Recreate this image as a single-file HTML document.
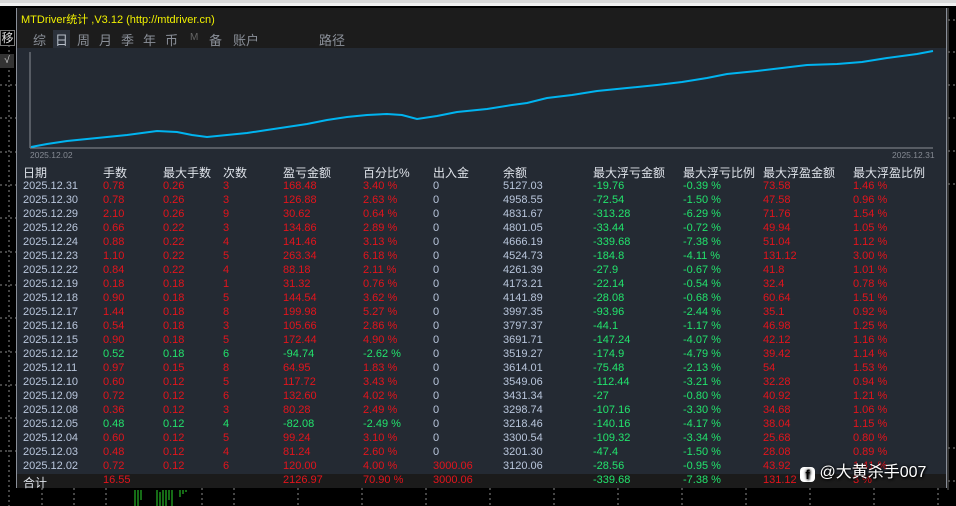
<!DOCTYPE html><html><head><meta charset="utf-8"><style>
*{margin:0;padding:0;box-sizing:border-box}
body{width:956px;height:506px;background:#000;position:relative;overflow:hidden;font-family:"Liberation Sans","Noto Sans CJK SC",sans-serif;font-size:11px}
.a{position:absolute;white-space:nowrap}
#panel{position:absolute;left:16px;top:8px;width:931px;height:480px;background:#242a33;border-left:1px solid #8a8f99;border-bottom:1px solid #8a8f99;border-right:1px solid #8a8f99}
.r{color:#e3141c}.g{color:#22e36c}.d{color:#b9c6dc}.w{color:#dfe3ea}
</style></head><body>
<div class="a" style="left:0;top:0;width:956px;height:3px;background:#d8d8d8"></div>
<div class="a" style="left:0;top:3px;width:956px;height:3px;background:#f0f0f0"></div>
<svg class="a" style="left:0;top:0" width="956" height="506">
<g stroke="#8a8a8a" stroke-dasharray="2,3">
<line x1="9" y1="40" x2="9" y2="506"/><line x1="0" y1="85" x2="16" y2="85"/><line x1="0" y1="118" x2="16" y2="118"/><line x1="0" y1="152" x2="16" y2="152"/><line x1="0" y1="185" x2="16" y2="185"/><line x1="0" y1="218" x2="16" y2="218"/><line x1="0" y1="252" x2="16" y2="252"/><line x1="0" y1="285" x2="16" y2="285"/><line x1="0" y1="318" x2="16" y2="318"/><line x1="0" y1="352" x2="16" y2="352"/><line x1="0" y1="385" x2="16" y2="385"/><line x1="0" y1="418" x2="16" y2="418"/><line x1="0" y1="451" x2="16" y2="451"/>
<line x1="42" y1="488" x2="42" y2="506"/><line x1="74" y1="488" x2="74" y2="506"/><line x1="106" y1="488" x2="106" y2="506"/><line x1="202" y1="488" x2="202" y2="506"/><line x1="234" y1="488" x2="234" y2="506"/><line x1="298" y1="488" x2="298" y2="506"/><line x1="362" y1="488" x2="362" y2="506"/><line x1="426" y1="488" x2="426" y2="506"/><line x1="490" y1="488" x2="490" y2="506"/><line x1="554" y1="488" x2="554" y2="506"/><line x1="618" y1="488" x2="618" y2="506"/><line x1="682" y1="488" x2="682" y2="506"/><line x1="746" y1="488" x2="746" y2="506"/><line x1="810" y1="488" x2="810" y2="506"/><line x1="874" y1="488" x2="874" y2="506"/><line x1="938" y1="488" x2="938" y2="506"/>
<line x1="948" y1="20" x2="956" y2="20"/><line x1="948" y1="52" x2="956" y2="52"/><line x1="948" y1="85" x2="956" y2="85"/><line x1="948" y1="118" x2="956" y2="118"/><line x1="948" y1="151" x2="956" y2="151"/><line x1="948" y1="184" x2="956" y2="184"/><line x1="948" y1="448" x2="956" y2="448"/><line x1="948" y1="481" x2="956" y2="481"/>
</g>
<line x1="948" y1="8" x2="948" y2="490" stroke="#666" stroke-width="1"/>
<g stroke="#2bd62b"><line x1="135" y1="506" x2="135" y2="490"/><line x1="138" y1="506" x2="138" y2="490"/><line x1="141" y1="500" x2="141" y2="490"/><line x1="157" y1="506" x2="157" y2="490"/><line x1="160" y1="506" x2="160" y2="492"/><line x1="163" y1="506" x2="163" y2="490"/><line x1="166" y1="506" x2="166" y2="490"/><line x1="169" y1="500" x2="169" y2="490"/><line x1="172" y1="506" x2="172" y2="490"/><line x1="180" y1="497" x2="180" y2="490"/><line x1="183" y1="494" x2="183" y2="490"/><line x1="186" y1="492" x2="186" y2="490"/></g>
</svg>
<div class="a" style="left:0;top:30px;width:15px;height:16px;border:1px solid #777;color:#ddd;font-size:12px;line-height:14px;text-align:center">移</div>
<div class="a" style="left:0;top:54px;width:14px;height:14px;background:#333;color:#ccc;font-size:10px;line-height:14px;text-align:center">√</div>
<div id="panel">
<div class="a" style="left:0;top:0;width:929px;height:40px;background:#1c1c1c"></div>
<div class="a" style="left:4px;top:3px;color:#f0f000;font-size:11px">MTDriver统计 ,V3.12 (http://mtdriver.cn)</div>
<div class="a" style="left:36px;top:22px;width:17px;height:18px;background:#2c323c"></div>
<div class="a" style="left:16px;top:22px;color:#8a8f98;font-size:13px">
<span style="position:absolute;left:0">综</span><span style="position:absolute;left:22px;color:#b8bfc9">日</span><span style="position:absolute;left:44px">周</span><span style="position:absolute;left:66px">月</span><span style="position:absolute;left:88px">季</span><span style="position:absolute;left:110px">年</span><span style="position:absolute;left:132px">币</span><span style="position:absolute;left:157px;font-size:10px;top:2px;color:#666">M</span><span style="position:absolute;left:176px">备</span><span style="position:absolute;left:200px">账户</span><span style="position:absolute;left:286px">路径</span></div>
<svg class="a" style="left:0;top:40px" width="929" height="120">
<line x1="13" y1="4" x2="13" y2="100" stroke="#8a8e95"/><line x1="13" y1="100" x2="916" y2="100" stroke="#8a8e95"/>
<polyline fill="none" stroke="#00b4f0" stroke-width="2" points="14,99 30,96 50,93 70,91 90,89 110,87 125,85 140,83 160,84 175,87 190,89 210,87 230,85 250,82 270,79 290,76 310,72 330,69 350,67 370,66 385,67 400,71 420,68 440,64 470,61 495,57 510,55 530,50 555,47 580,43 610,40 640,37 665,34 690,30 710,26 740,23 765,20 790,17 820,16 845,14 870,10 900,6 916,3"/>
</svg>
<div class="a" style="left:13px;top:142px;color:#858a93;font-size:8.5px">2025.12.02</div>
<div class="a" style="left:875px;top:142px;color:#858a93;font-size:8.5px">2025.12.31</div>
<div class="a" style="left:0;top:466px;width:929px;height:14px;background:#1b1b1b"></div>
<div id="t"></div>
</div>
<div class="a" style="left:800px;top:458px;color:#fff;font-size:16px;text-shadow:0 0 3px #000,1px 1px 2px #000"><span style="display:inline-block;width:15px;height:15px;background:#fff;border-radius:4px;color:#000;font-size:13px;font-weight:bold;text-align:center;line-height:16px;vertical-align:-2px">f</span> @大黄杀手007</div>
<script>
const X=[6,86,146,206,266,346,416,486,576,666,746,836];
const H=["日期","手数","最大手数","次数","盈亏金额","百分比%","出入金","余额","最大浮亏金额","最大浮亏比例","最大浮盈金额","最大浮盈比例"];
const D=`2025.12.31|0.78|0.26|3|168.48|3.40 %|0|5127.03|-19.76|-0.39 %|73.58|1.46 %
2025.12.30|0.78|0.26|3|126.88|2.63 %|0|4958.55|-72.54|-1.50 %|47.58|0.96 %
2025.12.29|2.10|0.26|9|30.62|0.64 %|0|4831.67|-313.28|-6.29 %|71.76|1.54 %
2025.12.26|0.66|0.22|3|134.86|2.89 %|0|4801.05|-33.44|-0.72 %|49.94|1.05 %
2025.12.24|0.88|0.22|4|141.46|3.13 %|0|4666.19|-339.68|-7.38 %|51.04|1.12 %
2025.12.23|1.10|0.22|5|263.34|6.18 %|0|4524.73|-184.8|-4.11 %|131.12|3.00 %
2025.12.22|0.84|0.22|4|88.18|2.11 %|0|4261.39|-27.9|-0.67 %|41.8|1.01 %
2025.12.19|0.18|0.18|1|31.32|0.76 %|0|4173.21|-22.14|-0.54 %|32.4|0.78 %
2025.12.18|0.90|0.18|5|144.54|3.62 %|0|4141.89|-28.08|-0.68 %|60.64|1.51 %
2025.12.17|1.44|0.18|8|199.98|5.27 %|0|3997.35|-93.96|-2.44 %|35.1|0.92 %
2025.12.16|0.54|0.18|3|105.66|2.86 %|0|3797.37|-44.1|-1.17 %|46.98|1.25 %
2025.12.15|0.90|0.18|5|172.44|4.90 %|0|3691.71|-147.24|-4.07 %|42.12|1.16 %
2025.12.12|0.52|0.18|6|-94.74|-2.62 %|0|3519.27|-174.9|-4.79 %|39.42|1.14 %
2025.12.11|0.97|0.15|8|64.95|1.83 %|0|3614.01|-75.48|-2.13 %|54|1.53 %
2025.12.10|0.60|0.12|5|117.72|3.43 %|0|3549.06|-112.44|-3.21 %|32.28|0.94 %
2025.12.09|0.72|0.12|6|132.60|4.02 %|0|3431.34|-27|-0.80 %|40.92|1.21 %
2025.12.08|0.36|0.12|3|80.28|2.49 %|0|3298.74|-107.16|-3.30 %|34.68|1.06 %
2025.12.05|0.48|0.12|4|-82.08|-2.49 %|0|3218.46|-140.16|-4.17 %|38.04|1.15 %
2025.12.04|0.60|0.12|5|99.24|3.10 %|0|3300.54|-109.32|-3.34 %|25.68|0.80 %
2025.12.03|0.48|0.12|4|81.24|2.60 %|0|3201.30|-47.4|-1.50 %|28.08|0.89 %
2025.12.02|0.72|0.12|6|120.00|4.00 %|3000.06|3120.06|-28.56|-0.95 %|43.92|1.41 %
合计|16.55|||2126.97|70.90 %|3000.06||-339.68|-7.38 %|131.12|3 %`.split("\n");
let h="";
H.forEach((t,i)=>h+=`<div class="a w" style="left:${X[i]}px;top:156px;font-size:12px">${t}</div>`);
D.forEach((l,r)=>{let c=l.split("|");const y=172+r*14;
let neg=c[4].startsWith("-");
c.forEach((v,i)=>{if(!v)return;let cls;
if(i==0)cls=r==21?"w":"d";else if(i<=5)cls=neg?"g":"r";else if(i==6)cls=v=="0"?"d":"r";else if(i==7)cls="d";else if(i<=9)cls="g";else cls="r";
let fs=(i==0&&r==21)?"font-size:12px;":"";
h+=`<div class="a ${cls}" style="left:${X[i]}px;top:${y}px;${fs}">${v}</div>`;});});
document.getElementById("t").innerHTML=h;
</script>
</body></html>
